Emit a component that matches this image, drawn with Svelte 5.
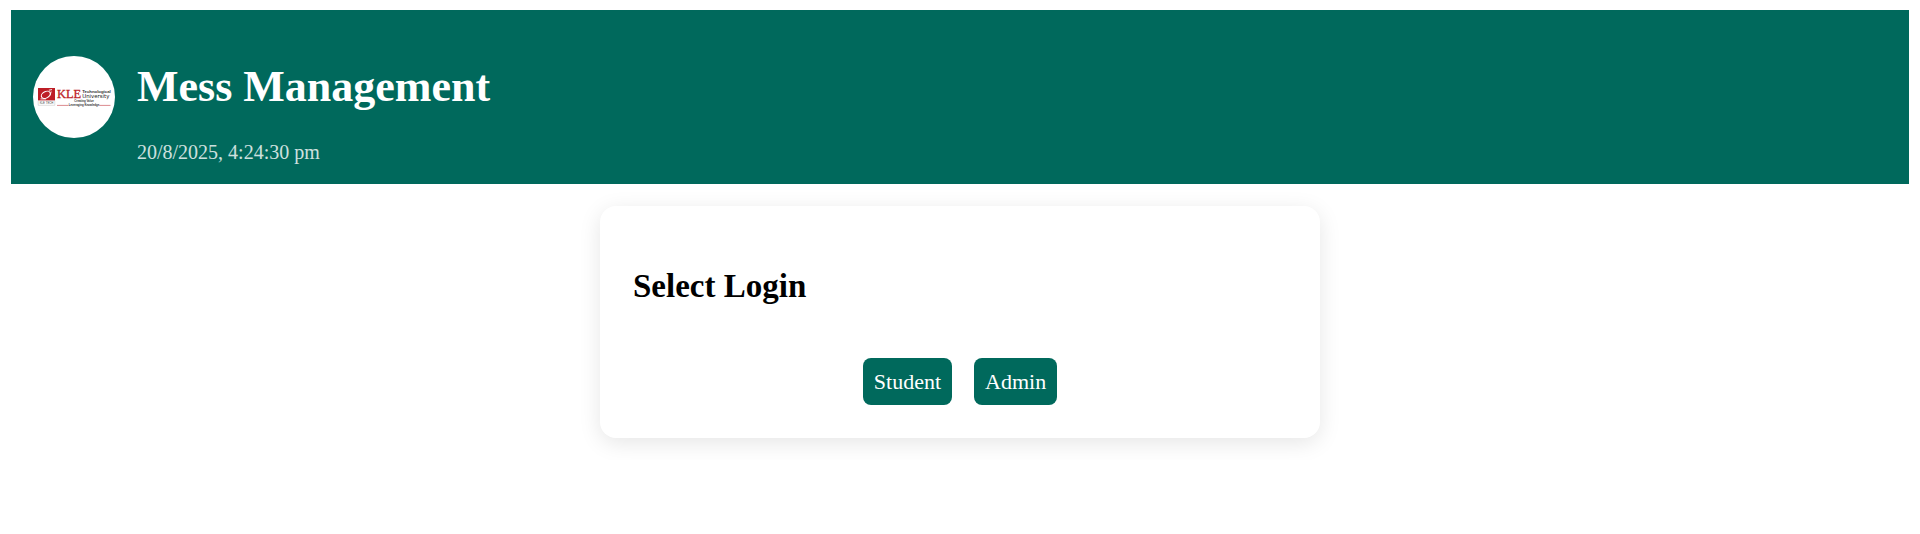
<script>
  const title = 'Mess Management';
  const timestamp = '20/8/2025, 4:24:30 pm';
  const roles = ['Student', 'Admin'];
</script>

<header>
  <svg class="logo" viewBox="0 0 820 820" role="img" aria-label="KLE Technological University">
    <circle cx="410" cy="410" r="410" fill="#fff" />
    <rect x="50" y="320" width="170" height="125" fill="#bd1e26" />
    <ellipse cx="128" cy="388" rx="48" ry="32" transform="rotate(-28 128 388)" fill="none" stroke="#fff" stroke-width="11" />
    <path d="M75 429h55M158 342l32-6M182 355l-12 40" fill="none" stroke="#fff" stroke-width="9" />
    <path d="M52 448v45h166v-45" fill="#fff" stroke="#c9c9c9" stroke-width="6" />
    <text class="sans" x="135" y="482" font-size="28" text-anchor="middle" fill="#444">KLE TECH</text>
    <text class="serif" x="240" y="422" font-size="124" fill="#bd1e26" stroke="#bd1e26" stroke-width="3">KLE</text>
    <text class="sans" x="492" y="370" font-size="43" font-weight="bold" fill="#333">Technological</text>
    <text class="wide" x="492" y="420" font-size="54" fill="#222">University</text>
    <text class="sans" x="510" y="463" font-size="28" font-weight="bold" text-anchor="middle" fill="#333">Creating Value</text>
    <text class="sans" x="510" y="499" font-size="28" font-weight="bold" text-anchor="middle" fill="#333">Leveraging Knowledge</text>
    <path d="M240 494h115M662 494h113" stroke="#cc5960" stroke-width="7" />
  </svg>
  <div>
    <h1>{title}</h1>
    <time>{timestamp}</time>
  </div>
</header>

<main>
  <h2>Select Login</h2>
  <div class="actions">
    {#each roles as role}
      <button type="button">{role}</button>
    {/each}
  </div>
</main>

<style>
  :global(body) {
    margin: 10px 11px;
    background: #fff;
    font-family: 'Liberation Serif', 'Times New Roman', serif;
  }

  header {
    display: flex;
    align-items: center;
    gap: 22px;
    padding: 22px;
    background: #00695c;
    color: #fff;
  }

  .logo {
    width: 82px;
    height: 82px;
    flex: none;
  }

  .sans {
    font-family: 'Liberation Sans', Arial, sans-serif;
  }

  .serif {
    font-family: 'Liberation Serif', serif;
  }

  .wide {
    font-family: 'DejaVu Sans', sans-serif;
  }

  h1 {
    margin: 30px 0;
    font-size: 44px;
    line-height: 50px;
  }

  time {
    display: block;
    font-size: 20px;
    line-height: 20px;
    opacity: 0.8;
  }

  main {
    box-sizing: border-box;
    max-width: 720px;
    margin: 22px auto;
    padding: 33px;
    border-radius: 16px;
    background: #fff;
    box-shadow: 0 5px 22px rgba(0, 0, 0, 0.1);
  }

  h2 {
    margin: 28px 0 53px;
    font-size: 33px;
    line-height: 38px;
  }

  .actions {
    display: flex;
    justify-content: center;
    gap: 22px;
  }

  button {
    padding: 11px;
    border: 0;
    border-radius: 8px;
    background: #00695c;
    color: #fff;
    font-family: inherit;
    font-size: 22px;
    line-height: 25px;
    cursor: pointer;
  }
</style>
